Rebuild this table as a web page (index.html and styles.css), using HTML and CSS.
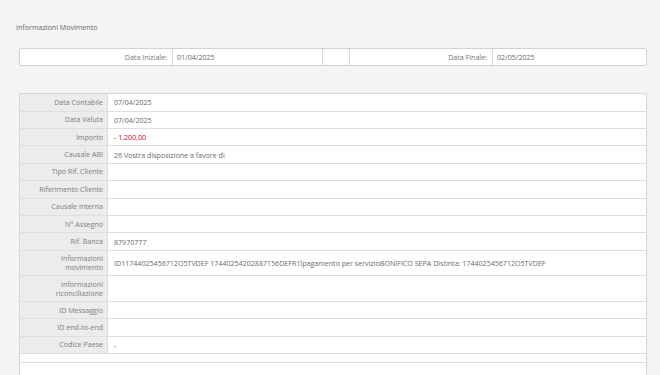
FILE: index.html
```html
<!DOCTYPE html>
<html lang="it">
<head>
<meta charset="utf-8">
<title>Informazioni Movimento</title>
<link rel="stylesheet" href="styles.css">
</head>
<body>
<div class="page">
  <div class="title">Informazioni Movimento</div>

  <div class="dates">
    <div class="dcell dlabel w1">Data Iniziale:</div>
    <div class="dcell dval w2">01/04/2025</div>
    <div class="dcell w3"></div>
    <div class="dcell dlabel w4">Data Finale:</div>
    <div class="dcell dval w5">02/05/2025</div>
  </div>

  <div class="details">
    <div class="row"><div class="lab">Data Contabile</div><div class="val">07/04/2025</div></div>
    <div class="row"><div class="lab">Data Valuta</div><div class="val">07/04/2025</div></div>
    <div class="row"><div class="lab">Importo</div><div class="val neg">- 1.200,00</div></div>
    <div class="row"><div class="lab">Causale ABI</div><div class="val">26 Vostra disposizione a favore di</div></div>
    <div class="row"><div class="lab">Tipo Rif. Cliente</div><div class="val"></div></div>
    <div class="row"><div class="lab">Riferimento Cliente</div><div class="val"></div></div>
    <div class="row"><div class="lab">Causale Interna</div><div class="val"></div></div>
    <div class="row"><div class="lab">N° Assegno</div><div class="val"></div></div>
    <div class="row"><div class="lab">Rif. Banca</div><div class="val">87970777</div></div>
    <div class="row tall"><div class="lab">Informazioni<br>movimento</div><div class="val">ID11744025456712O5TVDEF 17440254202887156DEFR1lpagamento per servizioBONIFICO SEPA Distinta: 1744025456712O5TVDEF</div></div>
    <div class="row tall"><div class="lab">Informazioni<br>riconciliazione</div><div class="val"></div></div>
    <div class="row"><div class="lab">ID Messaggio</div><div class="val"></div></div>
    <div class="row"><div class="lab">ID end-to-end</div><div class="val"></div></div>
    <div class="row"><div class="lab">Codice Paese</div><div class="val">-</div></div>
    <div class="spacer"></div>
    <div class="rest"></div>
  </div>
</div>
</body>
</html>
```
FILE: styles.css
```css
html, body {
  margin: 0;
  padding: 0;
  background: #f4f4f4;
  height: 100%;
  overflow: hidden;
}
body {
  font-family: "Open Sans", "Liberation Sans", sans-serif;
  font-size: 7.1px;
  color: #666;
}
.page {
  padding: 22px 13px 0 19px;
}
.title {
  line-height: 11px;
  height: 11px;
  margin-left: -3px;
  color: #666;
}
.dates {
  margin-top: 15px;
  display: flex;
  height: 18px;
  box-sizing: border-box;
  background: #fff;
  border: 1px solid #d2d2d2;
  border-radius: 2px;
}
.dcell {
  display: flex;
  align-items: center;
  box-sizing: border-box;
  border-left: 1px solid #d8d8d8;
}
.dcell:first-child { border-left: none; }
.dlabel {
  justify-content: flex-end;
  padding-right: 5px;
  color: #777;
}
.dval {
  padding-left: 4px;
  color: #6a6a6a;
}
.w1 { width: 152px; }
.w2 { width: 150px; }
.w3 { width: 27px; }
.w4 { width: 143px; }
.w5 { flex: 1; }

.details {
  margin-top: 27px;
  background: #fff;
  border: 1px solid #d4d4d4;
  border-bottom: none;
  border-radius: 3px 3px 0 0;
  overflow: hidden;
}
.row {
  display: flex;
  height: 17.4px;
  border-top: 1px solid #dedede;
  box-sizing: border-box;
}
.row:first-child { border-top: none; height: 16.6px; }
.row.tall { height: 25.6px; }
.lab {
  width: 88px;
  flex: none;
  background: #ececec;
  border-right: 1px solid #dcdcdc;
  display: flex;
  align-items: center;
  justify-content: flex-end;
  text-align: right;
  padding-right: 4px;
  box-sizing: border-box;
  color: #7c7c7c;
  line-height: 9px;
}
.val {
  flex: 1;
  display: flex;
  align-items: center;
  padding-left: 6px;
  color: #6a6a6a;
  white-space: nowrap;
}
.val.neg { color: #d0021b; }
.spacer {
  height: 9.4px;
  border-top: 1px solid #dedede;
  box-sizing: border-box;
}
.rest {
  height: 30px;
  border-top: 1px solid #dedede;
}
```
